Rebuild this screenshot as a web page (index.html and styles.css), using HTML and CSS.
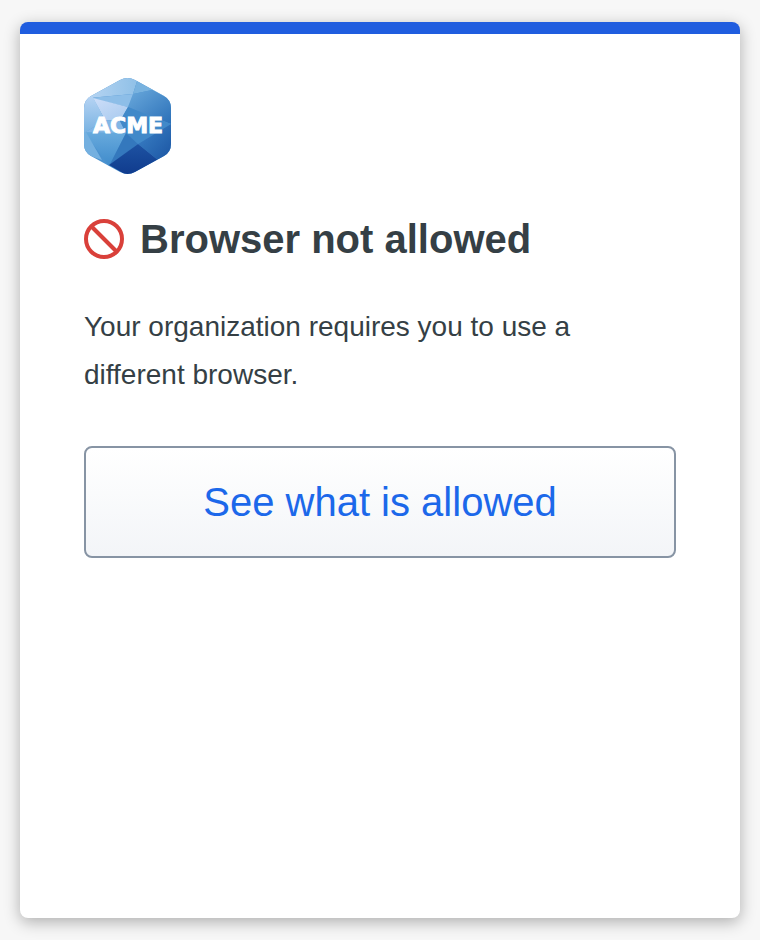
FILE: index.html
```
<!DOCTYPE html>
<html lang="en">
<head>
    <meta charset="UTF-8">
    <meta name="viewport" content="width=device-width, initial-scale=1.0">
    <title>Browser not allowed</title>
    <link rel="stylesheet" href="styles.css">
</head>
<body>

    <main class="card">
        <!-- Organization logo -->
        <svg class="logo" viewBox="0 0 87 96" role="img" aria-label="ACME">
            <defs>
                <clipPath id="hexagon">
                    <path d="M36 2Q43.500 -2 51 2L80 18Q87 22 87 30V66Q87 74 80 78L51 94Q43.500 98 36 94L7 78Q0 74 0 66V30Q0 22 7 18Z"/>
                </clipPath>
                <linearGradient id="top" x1="0" y1="0" x2="1" y2="0">
                    <stop offset="0" stop-color="#b9d6f3"/>
                    <stop offset="1" stop-color="#8fc0e7"/>
                </linearGradient>
                <linearGradient id="pale" x1="0" y1="0" x2="1" y2="1">
                    <stop offset="0" stop-color="#d3e1fa"/>
                    <stop offset="1" stop-color="#a6c9ee"/>
                </linearGradient>
                <linearGradient id="left" x1="0" y1="0" x2="0" y2="1">
                    <stop offset="0" stop-color="#b5d3f3"/>
                    <stop offset="1" stop-color="#7ab3e2"/>
                </linearGradient>
                <linearGradient id="right" x1="0" y1="0" x2="1" y2="1">
                    <stop offset="0" stop-color="#6aa9dc"/>
                    <stop offset="1" stop-color="#2b70b8"/>
                </linearGradient>
                <linearGradient id="lower" x1="0" y1="0" x2="1" y2="1">
                    <stop offset="0" stop-color="#3d84c8"/>
                    <stop offset="1" stop-color="#1b55a3"/>
                </linearGradient>
                <linearGradient id="bottom" x1="0" y1="0" x2="0" y2="1">
                    <stop offset="0" stop-color="#68aadd"/>
                    <stop offset="1" stop-color="#3f8bcb"/>
                </linearGradient>
                <linearGradient id="navy" x1="0" y1="0" x2="0" y2="1">
                    <stop offset="0" stop-color="#1d52a2"/>
                    <stop offset="1" stop-color="#0f3a8c"/>
                </linearGradient>
            </defs>
            <g clip-path="url(#hexagon)">
                <rect width="87" height="96" fill="#4b92cf"/>
                <path d="M0 0H54L49 16L5 20H0Z" fill="url(#top)"/>
                <path d="M54 0H87V22L68 12L49 16Z" fill="#78b2df"/>
                <path d="M49 16L68 12L87 22V46L44 29Z" fill="url(#right)"/>
                <path d="M5 20L49 16L44 29Z" fill="#8dbee8"/>
                <path d="M0 19H5L44 29L36 43L21 42L9 20Z" fill="url(#pale)"/>
                <path d="M0 19H9L21 42L2 54H0Z" fill="url(#left)"/>
                <path d="M21 42L36 43L42 55H0Z" fill="#82b6e5"/>
                <path d="M44 29L87 46L54 66L42 55L36 43Z" fill="#4189c9"/>
                <path d="M0 54L42 55L25 88Z" fill="url(#bottom)"/>
                <path d="M0 54L2 54L18 82L0 76Z" fill="#74b0e0"/>
                <path d="M42 55L54 66L25 88Z" fill="#3478bd"/>
                <path d="M87 46V80L74 82L54 66Z" fill="url(#lower)"/>
                <path d="M54 66L74 82L44 98L25 87Z" fill="url(#navy)"/>
            </g>
            <text class="logo-text" x="44" y="55" text-anchor="middle">ACME</text>
        </svg>

        <div class="heading">
            <svg class="blocked-icon" viewBox="0 0 40 40" aria-hidden="true">
                <circle cx="20" cy="20" r="18"/>
                <path d="M7 7L33 33"/>
            </svg>
            <h1>Browser not allowed</h1>
        </div>

        <p>Your organization requires you to use a different browser.</p>

        <button type="button" class="allowed-button">See what is allowed</button>
    </main>

</body>
</html>
```
FILE: styles.css
```
* {
    box-sizing: border-box;
}

body {
    display: flex;
    min-height: 100vh;
    margin: 0;
    padding: 22px 20px;
    background-color: #f7f7f7;
    color: #353f45;
    font-family: "Liberation Sans", Arial, sans-serif;
}

/* Card */
.card {
    flex: 1;
    padding: 44px 64px;
    border-top: 12px solid #205ddf;
    border-radius: 8px;
    background-color: #fff;
    box-shadow: 0 4px 16px rgba(0, 0, 0, 0.3);
}

.logo {
    display: block;
    width: 87px;
    height: 96px;
}

.logo-text {
    fill: #fff;
    stroke: #fff;
    stroke-width: 1;
    font-family: "DejaVu Sans", sans-serif;
    font-size: 22px;
    font-weight: bold;
}

/* Heading */
.heading {
    display: flex;
    align-items: center;
    gap: 16px;
    margin-top: 41px;
}

.blocked-icon {
    flex: none;
    width: 40px;
    height: 40px;
    fill: none;
    stroke: #d9403a;
    stroke-width: 4;
}

h1 {
    margin: 0;
    font-size: 40px;
    line-height: 48px;
}

p {
    margin: 40px 0 47px;
    font-size: 28px;
    line-height: 48px;
}

/* Button */
.allowed-button {
    width: 100%;
    padding: 30px 16px;
    border: 2px solid #8794a4;
    border-radius: 8px;
    background: linear-gradient(#fff, #f3f5f8);
    color: #1c68ea;
    font-family: inherit;
    font-size: 40px;
    line-height: 48px;
    cursor: pointer;
}

.allowed-button:hover {
    background: #f3f5f8;
}
```
